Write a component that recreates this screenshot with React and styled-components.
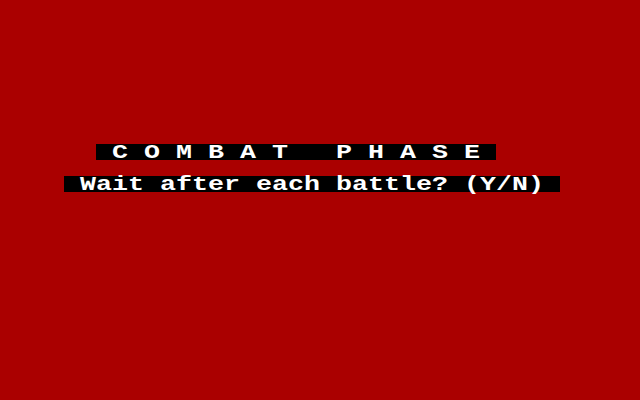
import React from "react";
import styled, { createGlobalStyle } from "styled-components";

// 40x25 text screen: every cell is 16x16 px
const CELL = 16;

const GlobalStyle = createGlobalStyle`
  html, body {
    margin: 0;
    padding: 0;
    background: #aa0000;
  }
`;

const Screen = styled.div`
  width: 640px;
  height: 400px;
  background: #aa0000;
  display: flex;
  flex-direction: column;
  align-items: flex-start;
  gap: ${CELL}px;
  padding-top: ${CELL * 9}px;
  box-sizing: border-box;
  overflow: hidden;
`;

const Bar = styled.div`
  margin-left: ${(p) => p.$col * CELL}px;
  height: ${CELL}px;
  background: #000000;
`;

// wide mono glyphs squashed vertically, like a doubled 8x8 charset
const Text = styled.span`
  display: block;
  color: #ffffff;
  font-family: "Liberation Mono", "DejaVu Sans Mono", monospace;
  font-weight: bold;
  font-size: 26.667px;
  line-height: 25px;
  white-space: pre;
  transform: scaleY(0.76);
  transform-origin: top left;
`;

const App = () => {
  return (
    <>
      <GlobalStyle />
      <Screen>
        <Bar $col={6}>
          <Text>{" C O M B A T   P H A S E "}</Text>
        </Bar>
        <Bar $col={4}>
          <Text>{" Wait after each battle? (Y/N) "}</Text>
        </Bar>
      </Screen>
    </>
  );
};

export default App;
